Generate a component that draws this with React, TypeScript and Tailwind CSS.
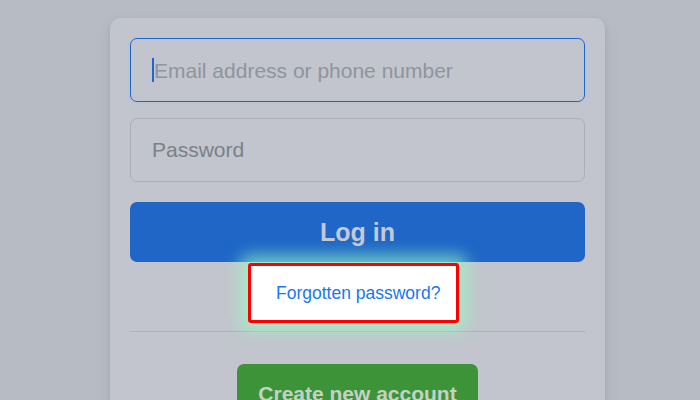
import React from 'react';

export default function App() {
  return (
    <div
      className="w-[700px] h-[400px] overflow-hidden bg-[#b7bbc4] flex pl-[110px]"
      style={{ fontFamily: '"Liberation Sans", Arial, Helvetica, sans-serif' }}
    >
      <div className="mt-[18px] w-[495px] h-[420px] rounded-[10px] bg-[#c2c5cd] shadow-[0_2px_6px_rgba(0,0,0,0.08),0_8px_20px_rgba(0,0,0,0.06)] px-5 pt-5 flex flex-col items-center">
        {/* email (focused) */}
        <div className="w-full h-[64px] rounded-[7px] border border-[#1f66c7] shadow-[0_0_0_2px_#bcc4d2] flex items-center pl-[21px]">
          <span className="w-[2px] h-[24px] bg-[#1f66c7]" />
          <span className="text-[21px] text-[#8f949d] leading-none">Email address or phone number</span>
        </div>

        {/* password */}
        <div className="mt-4 w-full h-[64px] rounded-[7px] border border-[#aaaeb6] flex items-center pl-[21px] pb-[2px]">
          <span className="text-[21px] text-[#7b8089] leading-none">Password</span>
        </div>

        {/* log in */}
        <button className="mt-5 w-full h-[60px] rounded-[7px] bg-[#1f66c7] text-[#c4c9d3] text-[25px] font-bold pt-[1px]">
          Log in
        </button>

        {/* highlighted link */}
        <div className="relative z-10 self-start ml-[118px] mt-[1px] w-[211px] h-[60px] bg-white border-[3px] border-[#ff0000] rounded-[3px] shadow-[0_0_16px_8px_rgba(150,255,195,0.65)] flex items-center pl-[25px]">
          <span className="text-[17.5px] text-[#1877f2]">Forgotten password?</span>
        </div>

        {/* divider */}
        <div className="mt-2 w-full h-px bg-[#aeb1b9]" />

        {/* create account */}
        <button className="mt-8 w-[241px] h-[60px] rounded-[7px] bg-[#3d9438] text-[#c5d0c8] text-[21px] font-bold">
          Create new account
        </button>
      </div>
    </div>
  );
}
